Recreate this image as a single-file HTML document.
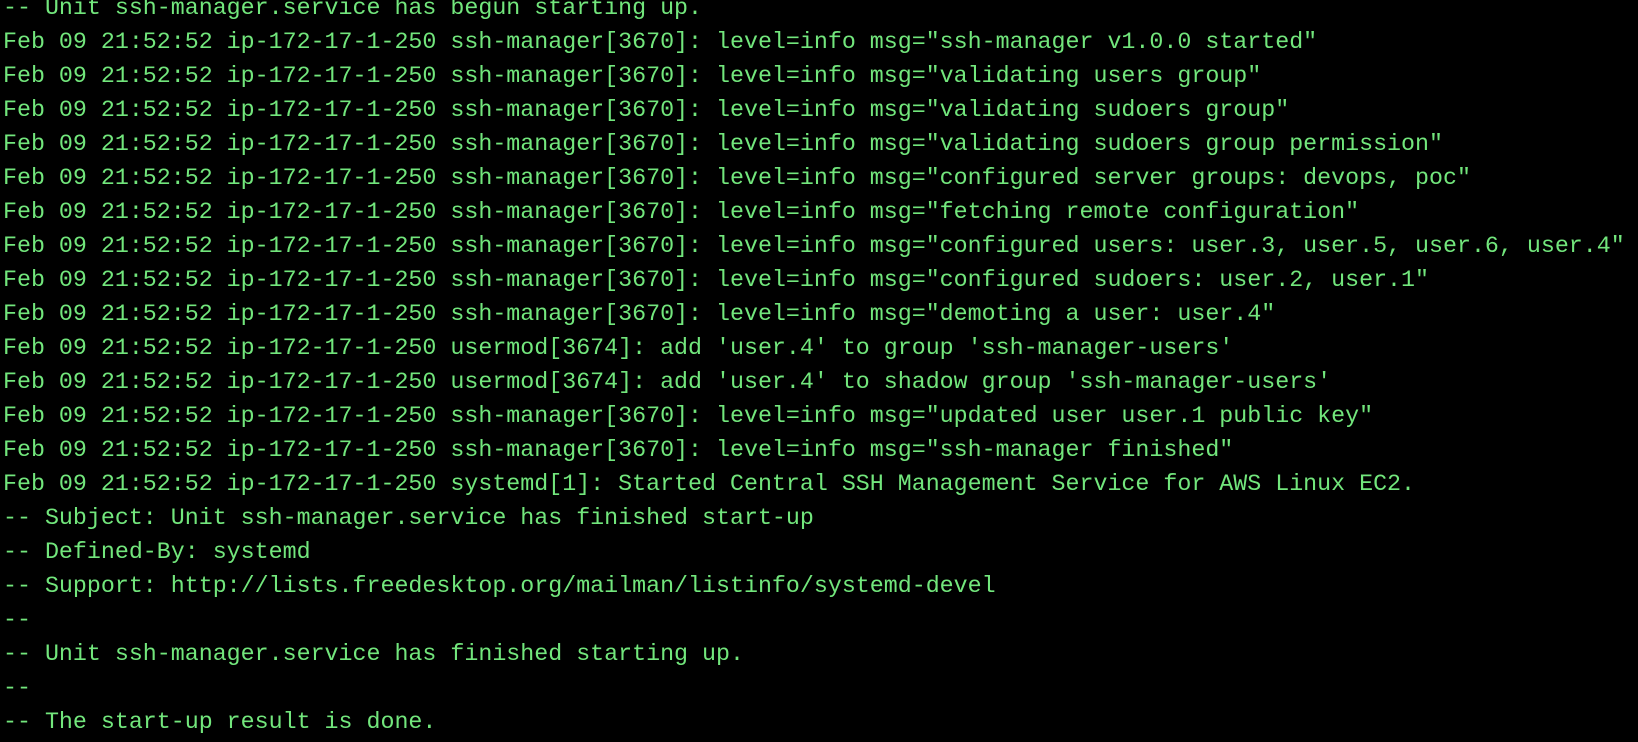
<!DOCTYPE html>
<html><head><meta charset="utf-8"><style>
html,body{margin:0;padding:0;background:#000;width:1638px;height:742px;overflow:hidden}
pre{position:absolute;left:3px;top:-9px;margin:0;font-family:"Liberation Mono",monospace;font-size:23.3px;line-height:34px;color:#72e67c;white-space:pre}
</style></head><body><pre>-- Unit ssh-manager.service has begun starting up.
Feb 09 21:52:52 ip-172-17-1-250 ssh-manager[3670]: level=info msg="ssh-manager v1.0.0 started"
Feb 09 21:52:52 ip-172-17-1-250 ssh-manager[3670]: level=info msg="validating users group"
Feb 09 21:52:52 ip-172-17-1-250 ssh-manager[3670]: level=info msg="validating sudoers group"
Feb 09 21:52:52 ip-172-17-1-250 ssh-manager[3670]: level=info msg="validating sudoers group permission"
Feb 09 21:52:52 ip-172-17-1-250 ssh-manager[3670]: level=info msg="configured server groups: devops, poc"
Feb 09 21:52:52 ip-172-17-1-250 ssh-manager[3670]: level=info msg="fetching remote configuration"
Feb 09 21:52:52 ip-172-17-1-250 ssh-manager[3670]: level=info msg="configured users: user.3, user.5, user.6, user.4"
Feb 09 21:52:52 ip-172-17-1-250 ssh-manager[3670]: level=info msg="configured sudoers: user.2, user.1"
Feb 09 21:52:52 ip-172-17-1-250 ssh-manager[3670]: level=info msg="demoting a user: user.4"
Feb 09 21:52:52 ip-172-17-1-250 usermod[3674]: add 'user.4' to group 'ssh-manager-users'
Feb 09 21:52:52 ip-172-17-1-250 usermod[3674]: add 'user.4' to shadow group 'ssh-manager-users'
Feb 09 21:52:52 ip-172-17-1-250 ssh-manager[3670]: level=info msg="updated user user.1 public key"
Feb 09 21:52:52 ip-172-17-1-250 ssh-manager[3670]: level=info msg="ssh-manager finished"
Feb 09 21:52:52 ip-172-17-1-250 systemd[1]: Started Central SSH Management Service for AWS Linux EC2.
-- Subject: Unit ssh-manager.service has finished start-up
-- Defined-By: systemd
-- Support: http://lists.freedesktop.org/mailman/listinfo/systemd-devel
--
-- Unit ssh-manager.service has finished starting up.
--
-- The start-up result is done.</pre></body></html>
